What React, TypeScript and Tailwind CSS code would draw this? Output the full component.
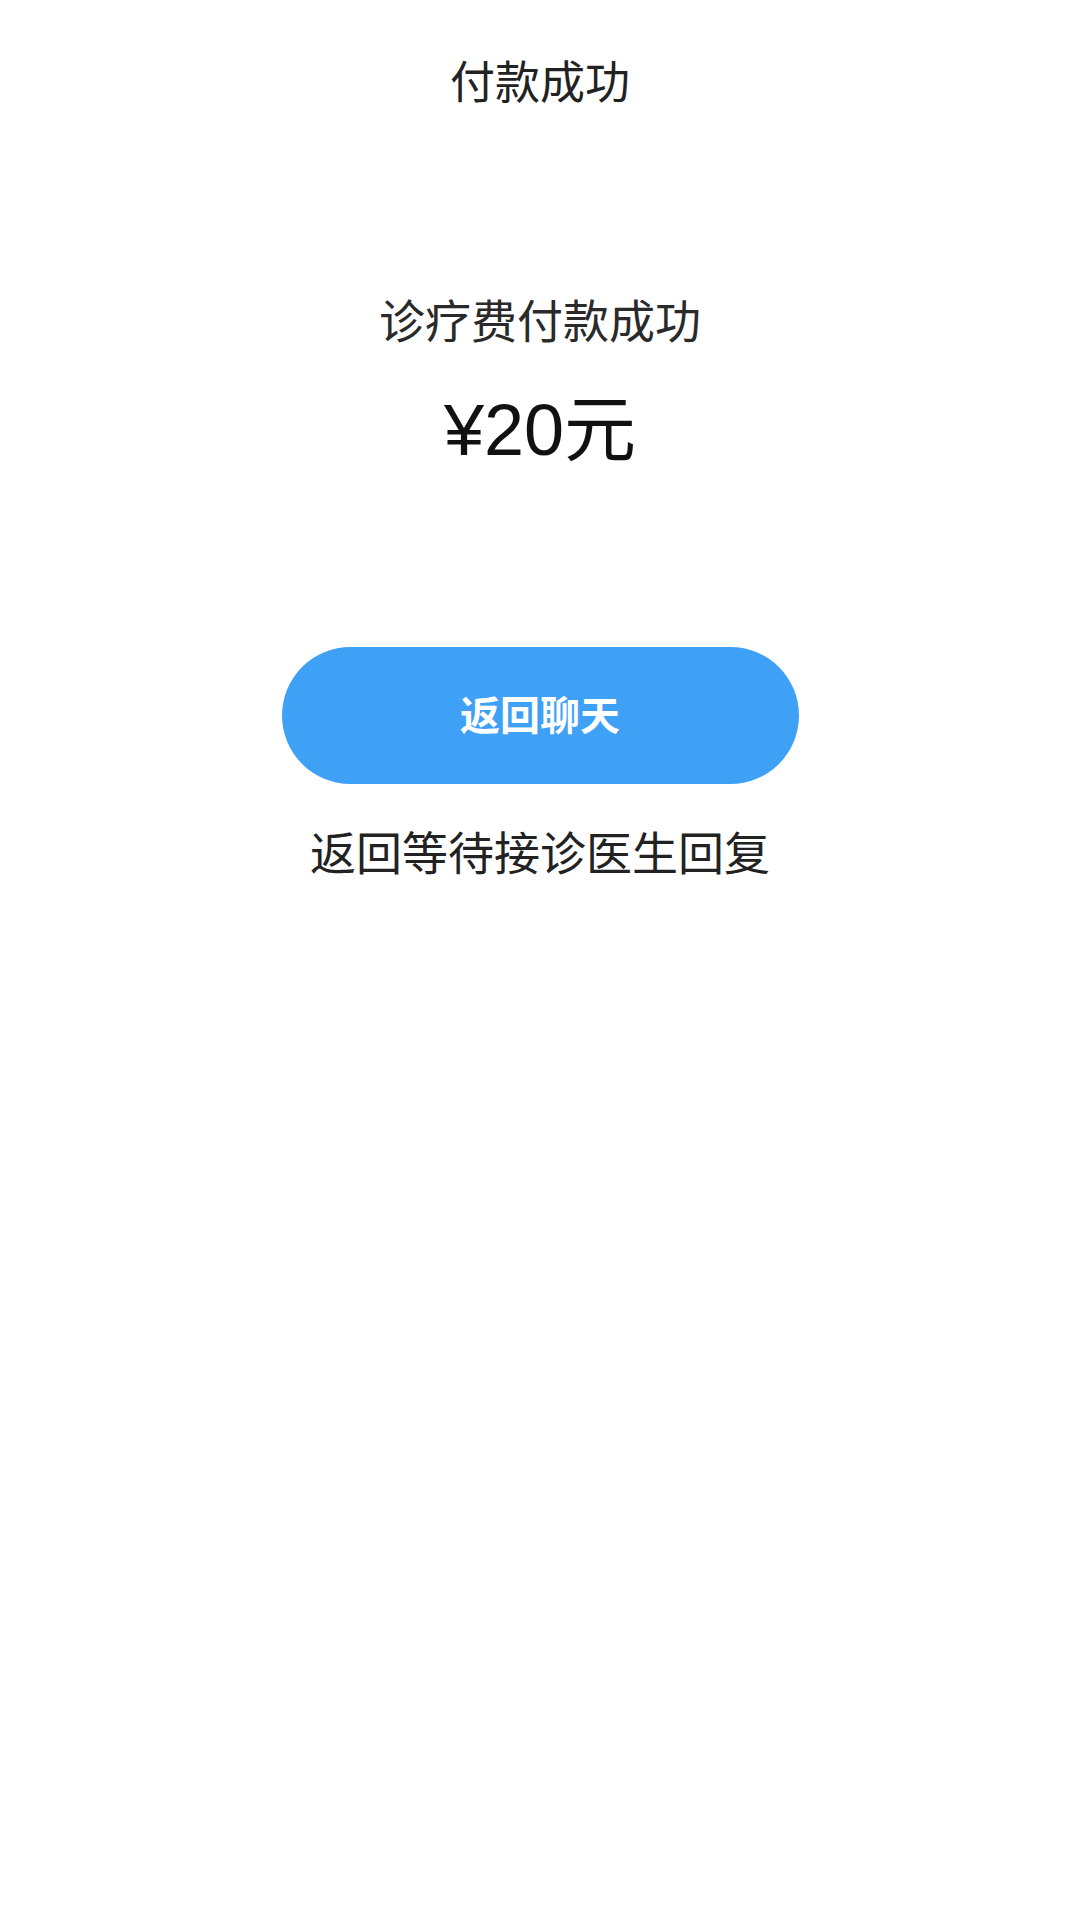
export default function App() {
  return (
    <div className="min-h-screen w-full bg-white font-['Liberation_Sans','Noto_Sans_CJK_SC',sans-serif] flex flex-col items-center">
      <div className="h-[166px] w-full flex items-center justify-center">
        <h1 className="text-[45px] leading-none text-[#222] font-normal">付款成功</h1>
      </div>

      <p className="mt-[133px] text-[46px] leading-[46px] text-[#2a2a2a]">诊疗费付款成功</p>

      <p className="mt-[49px] text-[72px] leading-[72px] text-[#111]">¥20元</p>

      <button className="mt-[181px] h-[137px] w-[517px] rounded-full bg-[#3fa1f6] text-white text-[40px] font-semibold leading-none flex items-center justify-center">
        返回聊天
      </button>

      <p className="mt-[47px] text-[46px] leading-[46px] text-[#222]">返回等待接诊医生回复</p>
    </div>
  );
}
